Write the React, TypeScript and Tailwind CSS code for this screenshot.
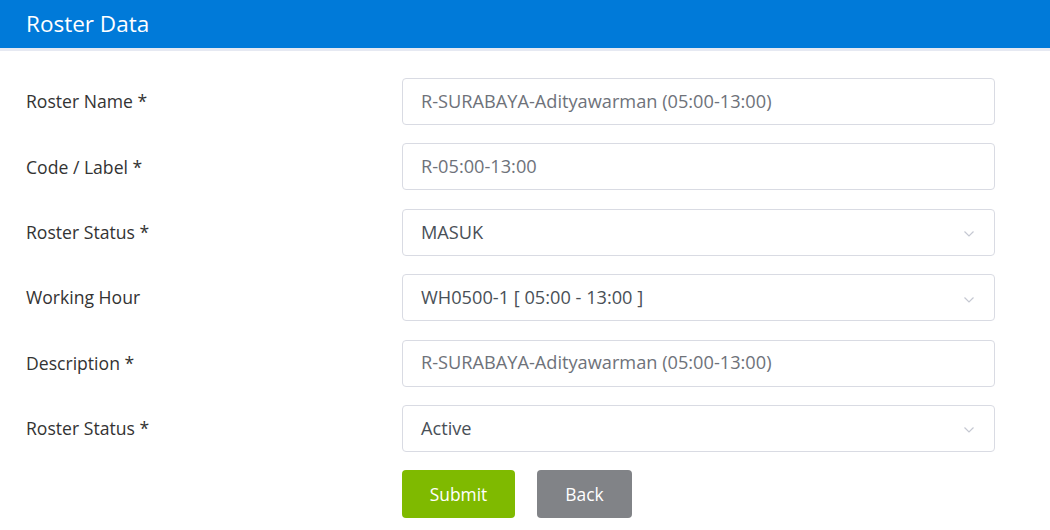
import React from "react";

const Chevron = () => (
  <svg width="12" height="8" viewBox="0 0 12 8" className="absolute right-[19px] top-1/2 -translate-y-1/2 mt-[2px]">
    <path d="M1.5 1.5 L6 6 L10.5 1.5" fill="none" stroke="#c5c8d2" strokeWidth="1.2" />
  </svg>
);

type Row = { label: string; value: string; select?: boolean };

const rows: Row[] = [
  { label: "Roster Name *", value: "R-SURABAYA-Adityawarman (05:00-13:00)" },
  { label: "Code / Label *", value: "R-05:00-13:00" },
  { label: "Roster Status *", value: "MASUK", select: true },
  { label: "Working Hour", value: "WH0500-1 [ 05:00 - 13:00 ]", select: true },
  { label: "Description *", value: "R-SURABAYA-Adityawarman (05:00-13:00)" },
  { label: "Roster Status *", value: "Active", select: true },
];

export default function App() {
  return (
    <div className="w-[1050px] h-[530px] bg-white overflow-hidden" style={{ fontFamily: '"Open Sans", sans-serif' }}>
      <div className="h-[48px] bg-[#007ad9] flex items-center pl-[26px] text-white text-[22.5px] border-b-[3px] border-[#e6e9f2] box-content">
        Roster Data
      </div>
      <div className="pt-[27px] pr-[55px]">
        <div className="flex flex-col gap-[18.4px]">
          {rows.map((r, i) => (
            <div key={i} className="flex items-center">
              <div className="w-[402px] pl-[26px] text-[17.6px] text-[#333333]">{r.label}</div>
              <div className="relative flex-1 h-[47px] border border-[#d9dbe3] rounded-[4px] flex items-center pl-[18px] text-[18.2px]">
                <span className={r.select ? "text-[#495057]" : "text-[#6e727a]"}>{r.value}</span>
                {r.select && <Chevron />}
              </div>
            </div>
          ))}
        </div>
        <div className="flex gap-[22px] pl-[402px] mt-[18px]">
          <button className="w-[113px] h-[48px] rounded-[4px] bg-[#7fba00] text-white text-[17.4px]">Submit</button>
          <button className="w-[95px] h-[48px] rounded-[4px] bg-[#818387] text-white text-[17.4px]">Back</button>
        </div>
      </div>
    </div>
  );
}
